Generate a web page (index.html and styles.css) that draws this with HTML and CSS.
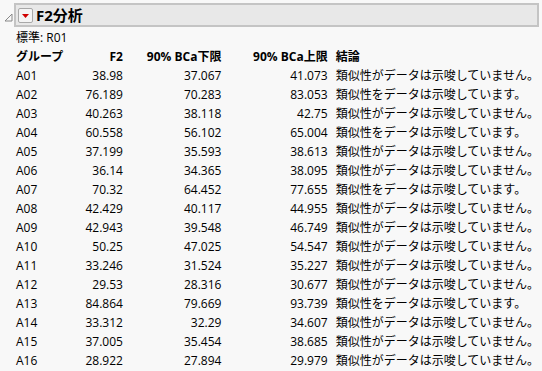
FILE: index.html
```html
<!DOCTYPE html>
<html lang="ja">
<head>
<meta charset="utf-8">
<link rel="stylesheet" href="styles.css">
</head>
<body>
<div class="report">
  <div class="outline">
    <svg class="disclose" width="9" height="9" viewBox="0 0 9 9"><path d="M8 1 L8 8 L1 8 Z" fill="none" stroke="#888" stroke-width="1"/></svg>
    <div class="titlebar">
      <span class="menu-btn"><svg width="13" height="13" viewBox="0 0 13 13"><path d="M3 5 L10 5 L6.5 9 Z" fill="#d00000"/></svg></span>
      <span class="title">F2分析</span>
    </div>
  </div>
  <div class="body">
    <div class="std">標準: R01</div>
    <table class="tbl">
      <thead>
        <tr><th class="l">グループ</th><th>F2</th><th>90% BCa下限</th><th>90% BCa上限</th><th class="l">結論</th></tr>
      </thead>
      <tbody>
        <tr><td class="l">A01</td><td>38.98</td><td>37.067</td><td>41.073</td><td class="l">類似性がデータは示唆していません。</td></tr>
        <tr><td class="l">A02</td><td>76.189</td><td>70.283</td><td>83.053</td><td class="l">類似性をデータは示唆しています。</td></tr>
        <tr><td class="l">A03</td><td>40.263</td><td>38.118</td><td>42.75</td><td class="l">類似性がデータは示唆していません。</td></tr>
        <tr><td class="l">A04</td><td>60.558</td><td>56.102</td><td>65.004</td><td class="l">類似性をデータは示唆しています。</td></tr>
        <tr><td class="l">A05</td><td>37.199</td><td>35.593</td><td>38.613</td><td class="l">類似性がデータは示唆していません。</td></tr>
        <tr><td class="l">A06</td><td>36.14</td><td>34.365</td><td>38.095</td><td class="l">類似性がデータは示唆していません。</td></tr>
        <tr><td class="l">A07</td><td>70.32</td><td>64.452</td><td>77.655</td><td class="l">類似性をデータは示唆しています。</td></tr>
        <tr><td class="l">A08</td><td>42.429</td><td>40.117</td><td>44.955</td><td class="l">類似性がデータは示唆していません。</td></tr>
        <tr><td class="l">A09</td><td>42.943</td><td>39.548</td><td>46.749</td><td class="l">類似性がデータは示唆していません。</td></tr>
        <tr><td class="l">A10</td><td>50.25</td><td>47.025</td><td>54.547</td><td class="l">類似性がデータは示唆していません。</td></tr>
        <tr><td class="l">A11</td><td>33.246</td><td>31.524</td><td>35.227</td><td class="l">類似性がデータは示唆していません。</td></tr>
        <tr><td class="l">A12</td><td>29.53</td><td>28.316</td><td>30.677</td><td class="l">類似性がデータは示唆していません。</td></tr>
        <tr><td class="l">A13</td><td>84.864</td><td>79.669</td><td>93.739</td><td class="l">類似性をデータは示唆しています。</td></tr>
        <tr><td class="l">A14</td><td>33.312</td><td>32.29</td><td>34.607</td><td class="l">類似性がデータは示唆していません。</td></tr>
        <tr><td class="l">A15</td><td>37.005</td><td>35.454</td><td>38.685</td><td class="l">類似性がデータは示唆していません。</td></tr>
        <tr><td class="l">A16</td><td>28.922</td><td>27.894</td><td>29.979</td><td class="l">類似性がデータは示唆していません。</td></tr>
      </tbody>
    </table>
  </div>
</div>
</body>
</html>
```
FILE: styles.css
```css
html, body {
  margin: 0;
  padding: 0;
  background: #f8f8f8;
}
body {
  font-family: "Open Sans", "Noto Sans CJK JP", sans-serif;
  font-size: 12px;
  color: #000;
  width: 542px;
  height: 371px;
  overflow: hidden;
}
.report {
  padding: 3px 3px 0 3px;
}
.outline {
  display: flex;
  align-items: flex-end;
  gap: 1px;
}
.disclose {
  margin: 0 0 5px 1px;
  flex: none;
}
.titlebar {
  flex: 1;
  height: 20px;
  background: #e8e8e8;
  border: 2px solid #c4c4c4;
  display: flex;
  align-items: center;
  gap: 3px;
  padding-left: 2px;
}
.menu-btn {
  width: 13px;
  height: 13px;
  border: 1px solid #a8a8a8;
  border-radius: 2px;
  background: #f4f4f4;
  display: flex;
}
.title {
  font-weight: bold;
  font-size: 15px;
  line-height: 20px;
}
.body {
  padding-left: 13px;
}
.std {
  line-height: 19px;
  margin-top: 1px;
}
.tbl {
  border-collapse: collapse;
}
.tbl th, .tbl td {
  padding: 0;
  height: 19px;
  line-height: 19px;
  text-align: right;
  white-space: nowrap;
}
.tbl th {
  font-weight: bold;
}
.tbl .l {
  text-align: left;
}
.tbl th:nth-child(1) { width: 70px; }
.tbl th:nth-child(2) { width: 33px; }
.tbl th:nth-child(3) { width: 99px; padding-left: 0; }
.tbl th:nth-child(4) { width: 107px; }
.tbl th:nth-child(5), .tbl td:nth-child(5) { padding-left: 8px; }
```
